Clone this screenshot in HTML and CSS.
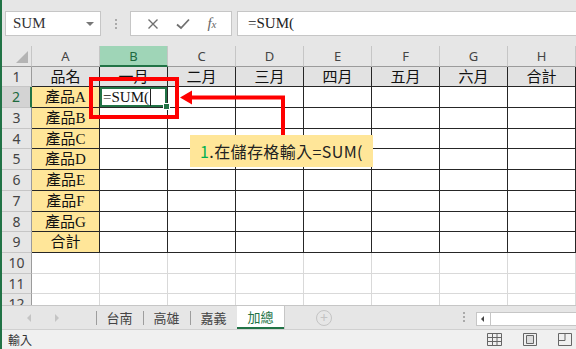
FILE: index.html
```html
<!DOCTYPE html>
<html lang="zh-Hant">
<head>
    <meta charset="UTF-8">
    <title>加總</title>
    <link rel="stylesheet" href="styles.css">
</head>
<body>
<div class="app">
    <div class="formula-bar">
        <div class="name-box">SUM<span class="drop"></span></div>
        <div class="grip"><i></i><i></i><i></i></div>
        <div class="fx-box">
            <svg class="ico" width="12" height="12" viewBox="0 0 12 12"><path d="M1.5 1.5 L10.5 10.5 M10.5 1.5 L1.5 10.5" stroke="#707070" stroke-width="1.4" fill="none"/></svg>
            <svg class="ico" width="14" height="12" viewBox="0 0 14 12"><path d="M1 6.5 L5 10 L13 1.5" stroke="#707070" stroke-width="1.8" fill="none"/></svg>
            <span class="fx">f<small>x</small></span>
        </div>
        <div class="formula-input">=SUM(</div>
    </div>

    <div class="sheet">
        <div class="corner"><span></span></div>
        <div class="col-head">A</div>
        <div class="col-head active">B</div>
        <div class="col-head">C</div>
        <div class="col-head">D</div>
        <div class="col-head">E</div>
        <div class="col-head">F</div>
        <div class="col-head">G</div>
        <div class="col-head">H</div>

        <div class="row-head">1</div>
        <div class="cell t title">品名</div>
        <div class="cell t title">一月</div>
        <div class="cell t title">二月</div>
        <div class="cell t title">三月</div>
        <div class="cell t title">四月</div>
        <div class="cell t title">五月</div>
        <div class="cell t title">六月</div>
        <div class="cell t title">合計</div>

        <div class="row-head active">2</div>
        <div class="cell t name">產品A</div>
        <div class="cell t edit">=SUM(<span class="caret"></span><span class="handle"></span></div>
        <div class="cell t"></div><div class="cell t"></div><div class="cell t"></div>
        <div class="cell t"></div><div class="cell t"></div><div class="cell t"></div>

        <div class="row-head">3</div>
        <div class="cell t name">產品B</div>
        <div class="cell t"></div><div class="cell t"></div><div class="cell t"></div><div class="cell t"></div>
        <div class="cell t"></div><div class="cell t"></div><div class="cell t"></div>

        <div class="row-head">4</div>
        <div class="cell t name">產品C</div>
        <div class="cell t"></div><div class="cell t"></div><div class="cell t"></div><div class="cell t"></div>
        <div class="cell t"></div><div class="cell t"></div><div class="cell t"></div>

        <div class="row-head">5</div>
        <div class="cell t name">產品D</div>
        <div class="cell t"></div><div class="cell t"></div><div class="cell t"></div><div class="cell t"></div>
        <div class="cell t"></div><div class="cell t"></div><div class="cell t"></div>

        <div class="row-head">6</div>
        <div class="cell t name">產品E</div>
        <div class="cell t"></div><div class="cell t"></div><div class="cell t"></div><div class="cell t"></div>
        <div class="cell t"></div><div class="cell t"></div><div class="cell t"></div>

        <div class="row-head">7</div>
        <div class="cell t name">產品F</div>
        <div class="cell t"></div><div class="cell t"></div><div class="cell t"></div><div class="cell t"></div>
        <div class="cell t"></div><div class="cell t"></div><div class="cell t"></div>

        <div class="row-head">8</div>
        <div class="cell t name">產品G</div>
        <div class="cell t"></div><div class="cell t"></div><div class="cell t"></div><div class="cell t"></div>
        <div class="cell t"></div><div class="cell t"></div><div class="cell t"></div>

        <div class="row-head">9</div>
        <div class="cell t name">合計</div>
        <div class="cell t"></div><div class="cell t"></div><div class="cell t"></div><div class="cell t"></div>
        <div class="cell t"></div><div class="cell t"></div><div class="cell t"></div>

        <div class="row-head">10</div>
        <div class="cell"></div><div class="cell"></div><div class="cell"></div><div class="cell"></div>
        <div class="cell"></div><div class="cell"></div><div class="cell"></div><div class="cell"></div>

        <div class="row-head">11</div>
        <div class="cell"></div><div class="cell"></div><div class="cell"></div><div class="cell"></div>
        <div class="cell"></div><div class="cell"></div><div class="cell"></div><div class="cell"></div>

        <div class="row-head">12</div>
        <div class="cell"></div><div class="cell"></div><div class="cell"></div><div class="cell"></div>
        <div class="cell"></div><div class="cell"></div><div class="cell"></div><div class="cell"></div>
    </div>

    <div class="tabs">
        <div class="tab-nav">
            <span class="nav-left"></span>
            <span class="nav-right"></span>
        </div>
        <div class="tab">台南</div>
        <div class="tab">高雄</div>
        <div class="tab">嘉義</div>
        <div class="tab active">加總</div>
        <div class="add-sheet">+</div>
        <div class="grip small"><i></i><i></i><i></i></div>
        <div class="hscroll"><span class="hscroll-btn"></span></div>
    </div>

    <div class="status">
        <span class="mode">輸入</span>
        <div class="views">
            <svg width="15" height="13" viewBox="0 0 15 13"><path d="M0.5 0.5 H14.5 V12.5 H0.5 Z M0.5 4.5 H14.5 M0.5 8.5 H14.5 M5.5 0.5 V12.5 M10 0.5 V12.5" stroke="#666" fill="none"/></svg>
            <svg width="14" height="13" viewBox="0 0 14 13"><path d="M0.5 0.5 H13.5 V12.5 H0.5 Z" stroke="#666" fill="none"/><path d="M3.5 2.5 H10.5 V10.5 H3.5 Z" stroke="#666" fill="#ddd"/></svg>
            <svg width="14" height="13" viewBox="0 0 14 13"><path d="M0.5 0.5 H13.5 V12.5 H0.5 Z M0.5 7.5 H7 M7 0.5 V7.5" stroke="#666" fill="none"/></svg>
        </div>
    </div>

    <div class="red-box"></div>
    <svg class="arrow" width="110" height="46" viewBox="0 0 110 46">
        <path d="M103 46 V5.5 H10" stroke="#ff0000" stroke-width="4" fill="none"/>
        <polygon points="0,5.5 12,-1.5 12,12.5" fill="#ff0000"/>
    </svg>
    <div class="callout"><span class="num">1</span>.在儲存格輸入=SUM(</div>
</div>
</body>
</html>
```

FILE: styles.css
```css
html, body {
    margin: 0;
    padding: 0;
    background: #fff;
}

.app {
    position: relative;
    width: 576px;
    height: 349px;
    box-sizing: border-box;
    border-left: 2px solid #217346;
    overflow: hidden;
    display: flex;
    flex-direction: column;
    background: #e6e6e6;
    font-family: "Noto Sans", "Noto Sans CJK TC", sans-serif;
    color: #333;
}

/* formula bar */
.formula-bar {
    height: 46px;
    flex: none;
    box-sizing: border-box;
    padding: 11px 0 0 3px;
    display: flex;
    align-items: flex-start;
}

.name-box,
.fx-box,
.formula-input {
    height: 25px;
    box-sizing: border-box;
    background: #fff;
    border: 1px solid #c6c6c6;
}

.name-box {
    width: 96px;
    position: relative;
    padding-left: 7px;
    font-family: "Liberation Serif", serif;
    font-size: 15px;
    line-height: 23px;
    color: #333;
}

.drop {
    position: absolute;
    right: 6px;
    top: 10px;
    border-left: 4px solid transparent;
    border-right: 4px solid transparent;
    border-top: 4px solid #777;
}

.grip {
    width: 29px;
    height: 25px;
    display: flex;
    flex-direction: column;
    align-items: center;
    justify-content: center;
    gap: 2px;
}

.grip i {
    width: 2px;
    height: 2px;
    background: #aaa;
}

.fx-box {
    width: 102px;
    display: flex;
    align-items: center;
    justify-content: space-around;
    padding: 0 6px 0 8px;
}

.fx {
    font: italic 15px "Liberation Serif", serif;
    color: #666;
}

.fx small {
    font-size: 11px;
}

.formula-input {
    flex: 1;
    margin-left: 5px;
    border-right: none;
    padding-left: 10px;
    font-family: "Liberation Serif", serif;
    font-size: 15px;
    line-height: 23px;
    color: #222;
}

/* sheet grid */
.sheet {
    height: 259px;
    flex: none;
    overflow: hidden;
    display: grid;
    grid-template-columns: 30px repeat(8, 68px);
    grid-auto-rows: 20.7px;
    background: #fff;
}

.sheet > div {
    box-sizing: border-box;
    border-right: 1px solid #d9d9d9;
    border-bottom: 1px solid #d9d9d9;
}

.corner,
.col-head,
.row-head {
    background: #e6e6e6;
}

.sheet > .corner,
.sheet > .col-head {
    border-right-color: #c6c6c6;
    border-bottom-color: #9b9b9b;
}

.sheet > .row-head {
    border-right-color: #9b9b9b;
    border-bottom-color: #c6c6c6;
}

.corner {
    position: relative;
}

.corner span {
    position: absolute;
    right: 3px;
    bottom: 3px;
    border-left: 12px solid transparent;
    border-bottom: 12px solid #b4b4b4;
}

.col-head {
    text-align: center;
    font: 13px/20px "Noto Sans", sans-serif;
    color: #444;
}

.sheet > .col-head.active {
    background: #9fd5b7;
    color: #1e6a3e;
    border-bottom: 2px solid #217346;
}

.row-head {
    text-align: center;
    font: 14px/20px "Noto Sans", sans-serif;
    color: #444;
    white-space: nowrap;
}

.sheet > .row-head.active {
    background: #d3d3d3;
    color: #1e6a3e;
    border-right: 2px solid #217346;
}

.cell {
    font: 15px/20px "Liberation Serif", "Noto Sans CJK TC", serif;
    color: #111;
    text-align: center;
    white-space: nowrap;
}

.sheet > .cell.t {
    border-right-color: #262626;
    border-bottom-color: #262626;
}

.cell.title {
    background: #e2e2e2;
}

.cell.name {
    background: #ffe699;
}

.cell.edit {
    position: relative;
    text-align: left;
    padding-left: 3px;
    box-shadow: inset 0 0 0 2px #217346;
}

.caret {
    display: inline-block;
    width: 1px;
    height: 17px;
    margin-left: 1px;
    vertical-align: -4px;
    background: #222;
}

.handle {
    position: absolute;
    right: -3px;
    bottom: -3px;
    width: 5px;
    height: 5px;
    background: #217346;
    border: 1px solid #fff;
}

/* sheet tabs */
.tabs {
    height: 24px;
    flex: none;
    box-sizing: border-box;
    border-top: 1px solid #c6c6c6;
    display: flex;
    align-items: stretch;
    font: 13px "Noto Sans CJK TC", sans-serif;
}

.tab-nav {
    width: 94px;
    position: relative;
}

.nav-left,
.nav-right {
    position: absolute;
    top: 8px;
    border-top: 4px solid transparent;
    border-bottom: 4px solid transparent;
}

.nav-left {
    left: 25px;
    border-right: 4px solid #c4c4c4;
}

.nav-right {
    left: 53px;
    border-left: 4px solid #c4c4c4;
}

.tab {
    width: 47px;
    display: flex;
    align-items: center;
    justify-content: center;
    color: #444;
    position: relative;
}

.tab::before {
    content: "";
    position: absolute;
    left: 0;
    top: 5px;
    bottom: 4px;
    width: 1px;
    background: #9d9d9d;
}

.tab.active {
    background: #fff;
    color: #217346;
    border-bottom: 2px solid #217346;
    box-shadow: 1px 0 0 #c6c6c6;
}

.tab.active::before {
    display: none;
}

.add-sheet {
    width: 14px;
    height: 14px;
    margin: 4px 0 0 32px;
    border: 1px solid #c4c4c4;
    border-radius: 50%;
    color: #c4c4c4;
    font: 14px/14px "Noto Sans", sans-serif;
    text-align: center;
}

.grip.small {
    height: 22px;
    width: 10px;
    margin-left: 127px;
}

.hscroll {
    flex: 1;
    margin: 6px 0 3px 7px;
    background: #fff;
    border: 1px solid #c6c6c6;
    border-right: none;
    position: relative;
}

.hscroll-btn {
    position: absolute;
    left: 0;
    top: 0;
    bottom: 0;
    width: 13px;
    border-right: 1px solid #c6c6c6;
}

.hscroll-btn::after {
    content: "";
    position: absolute;
    left: 4px;
    top: 3px;
    border-top: 3px solid transparent;
    border-bottom: 3px solid transparent;
    border-right: 3px solid #444;
}

/* status bar */
.status {
    flex: 1;
    box-sizing: border-box;
    border-top: 1px solid #d0d0d0;
    background: #f0f0f0;
    display: flex;
    align-items: center;
    justify-content: space-between;
    padding: 0 4px 0 6px;
}

.mode {
    font: 12px "Noto Sans CJK TC", sans-serif;
    color: #333;
}

.views {
    display: flex;
    gap: 21px;
    align-items: center;
}

/* annotation */
.red-box {
    position: absolute;
    left: 87px;
    top: 77px;
    width: 90px;
    height: 42px;
    box-sizing: border-box;
    border: 4px solid #ff0000;
}

.arrow {
    position: absolute;
    left: 178px;
    top: 92px;
    overflow: visible;
}

.callout {
    position: absolute;
    left: 188px;
    top: 135px;
    width: 183px;
    height: 32px;
    box-sizing: border-box;
    padding-left: 10px;
    background: #ffe699;
    font: 16px/32px "Noto Sans CJK TC", sans-serif;
    letter-spacing: 0.4px;
    color: #222;
}

.num {
    color: #00b050;
}
```
